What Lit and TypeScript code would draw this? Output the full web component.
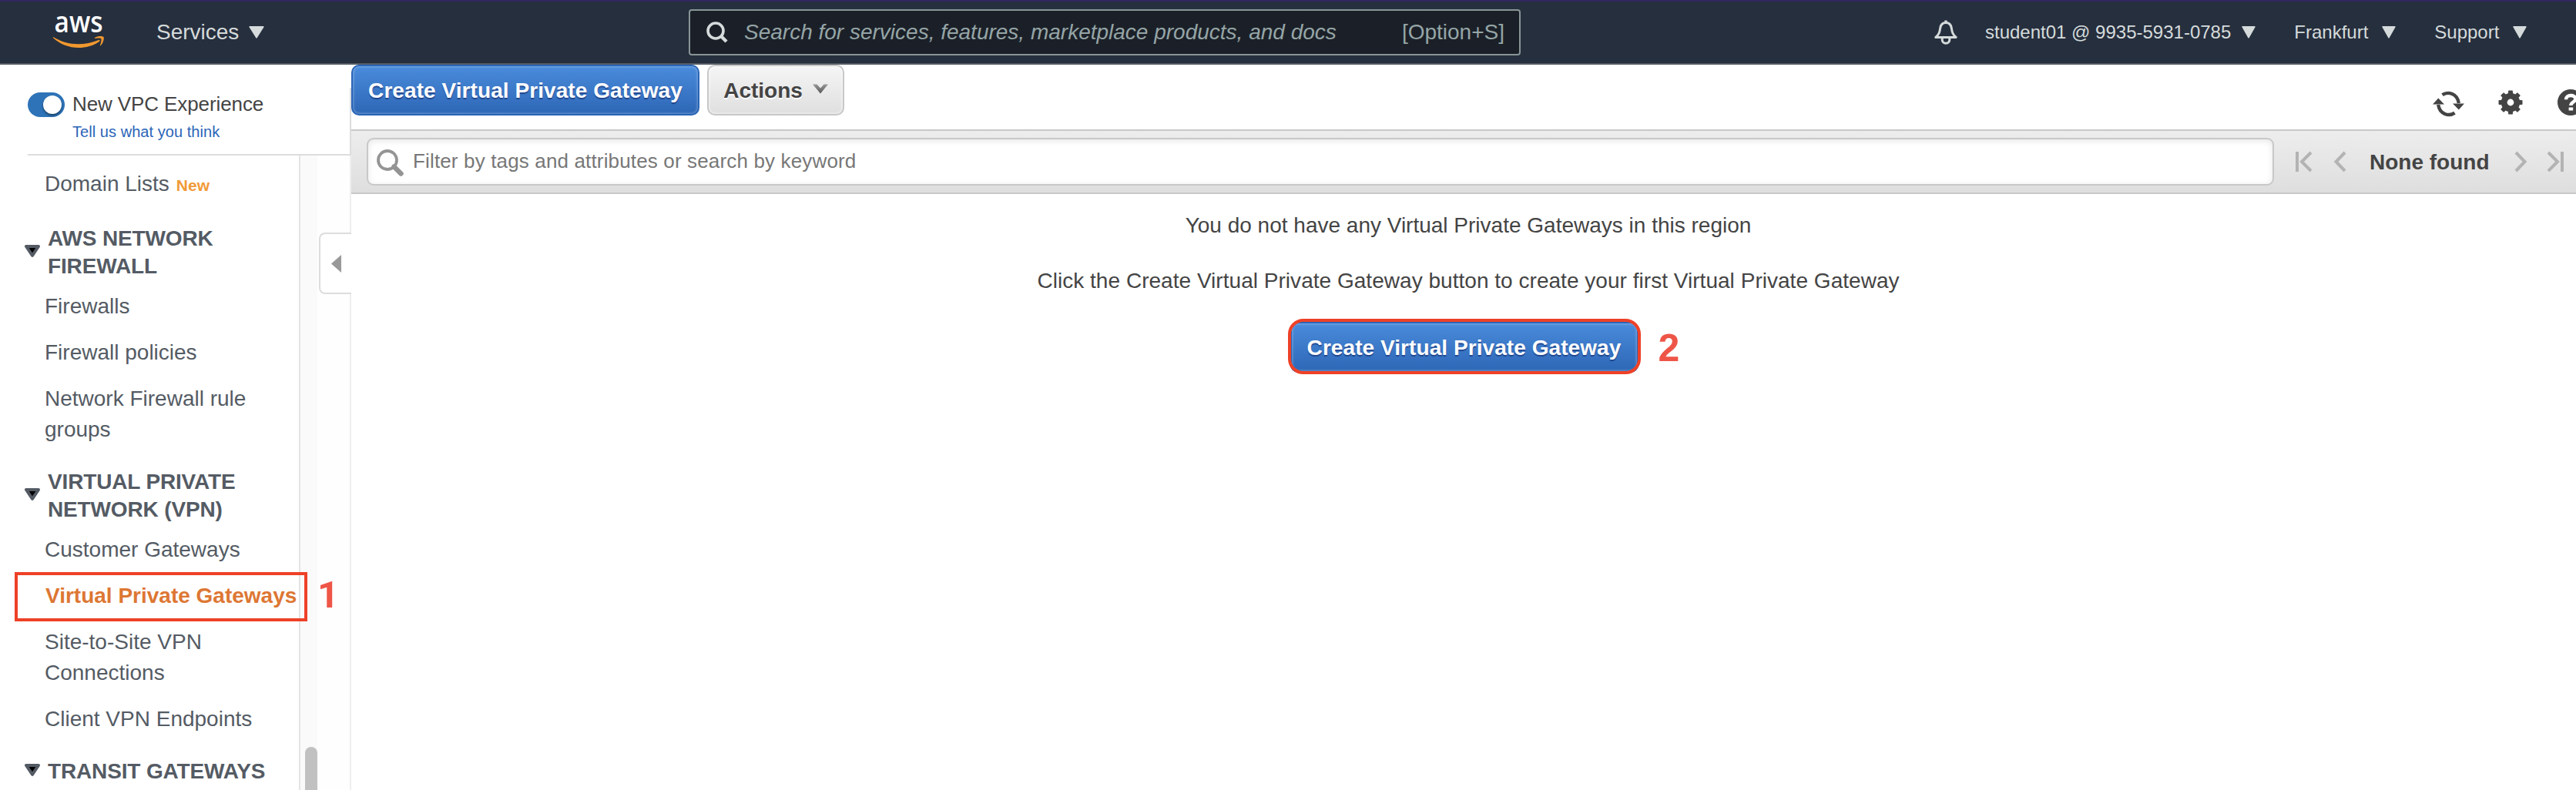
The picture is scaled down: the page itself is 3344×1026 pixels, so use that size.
import { LitElement, html, css, svg } from "lit";
import { customElement } from "lit/decorators.js";

interface NavItem {
  lines: string[];
  badge?: string;
  active?: boolean;
}

interface NavSection {
  title?: string[];
  items: NavItem[];
}

const NAV: NavSection[] = [
  { items: [{ lines: ["Domain Lists"], badge: "New" }] },
  {
    title: ["AWS NETWORK", "FIREWALL"],
    items: [
      { lines: ["Firewalls"] },
      { lines: ["Firewall policies"] },
      { lines: ["Network Firewall rule", "groups"] },
    ],
  },
  {
    title: ["VIRTUAL PRIVATE", "NETWORK (VPN)"],
    items: [
      { lines: ["Customer Gateways"] },
      { lines: ["Virtual Private Gateways"], active: true },
      { lines: ["Site-to-Site VPN", "Connections"] },
      { lines: ["Client VPN Endpoints"] },
    ],
  },
  { title: ["TRANSIT GATEWAYS"], items: [] },
];

const stack = (lines: string[]) =>
  lines.map((l) => html`<span class="line">${l}</span>`);

@customElement("top-bar")
class TopBar extends LitElement {
  static styles = css`
    :host { display: block; }
    * { box-sizing: border-box; }
    .bar {
      display: flex;
      height: 84px;
      border-top: 2px solid #32275f;
      border-bottom: 2px solid #545b64;
      background: #262f3e;
      color: #d5dbdb;
      padding: 0 62px 0 68px;
      align-items: center;
      white-space: nowrap;
    }
    svg { display: block; flex: none; }
    .logo { margin: -10px 66px 0 0; overflow: visible; }
    .logo text { font: 600 37px "Open Sans", sans-serif; fill: #fff; }
    .menu { display: flex; align-items: center; font-size: 24px; }
    .services { font-size: 28px; width: 691px; }
    .services svg { margin-left: 13px; }
    .search {
      display: flex;
      align-items: center;
      width: 1080px;
      height: 60px;
      border: 2px solid #879596;
      border-radius: 4px;
      background: #1b2028;
      color: #95a5a6;
      font-size: 28px;
      padding: 0 19px 0 21px;
      margin-right: 536px;
    }
    .search em { margin-left: 21px; flex: 1; }
    .account { margin-left: 35px; }
    .account svg { margin-left: 14px; }
    .region { margin-left: 50px; }
    .region svg { margin-left: 18px; }
  `;

  private caret(w: number) {
    return html`<svg width=${w} height="16" viewBox="0 0 20 16" preserveAspectRatio="none">
      <path d="M1.2 .8H18.8L10 14.8Z" fill="#d5dbdb" stroke="#d5dbdb" stroke-width="1.6" stroke-linejoin="round" />
    </svg>`;
  }

  render() {
    return html`<header class="bar">
      <svg class="logo" width="69" height="72" viewBox="68 1 69 72">
        <text x="70.500" y="42" textLength="63" lengthAdjust="spacingAndGlyphs">aws</text>
        <path d="M69.4 48.2C79 54 90 57.2 101.5 57.2C110 57.2 119.500 55.400 128 51.900C129.300 51.400 130.400 52.800 129.200 53.700C121.500 59.400 111 62 102 62C89.500 62 78 57.300 69.200 49.500C68.500 48.800 68.700 48 69.400 48.200Z" fill="#f0982f" />
        <path d="M131.200 50.200C130.300 49 125.600 49.600 123.400 49.900C122.700 50 122.600 49.400 123.200 48.900C127 46.300 133.200 47 134.400 47.900C135.600 49 134.200 55.700 130.800 59.100C130.200 59.600 129.700 59.400 129.900 58.700C130.700 56.800 132.200 51.500 131.200 50.200Z" fill="#f0982f" />
      </svg>
      <div class="menu services">Services ${this.caret(20)}</div>
      <div class="search">
        <svg width="28" height="28" viewBox="0 0 28 28" fill="none" stroke="#d5dbdb">
          <circle cx="12" cy="12" r="10" stroke-width="3.6" />
          <path d="M18.800 18.800L26 26" stroke-width="4.400" />
        </svg>
        <em>Search for services, features, marketplace products, and docs</em>
        <span>[Option+S]</span>
      </div>
      <svg width="32" height="32" viewBox="0 0 32 32" fill="none" stroke="#d5dbdb" stroke-width="3" stroke-linejoin="round">
        <path d="M16 .5V3.500" stroke-width="3.400" />
        <path d="M2.800 22.400C7.500 18.500 8 15 8.700 10.500C9.400 6 12 3.600 16 3.600S22.600 6 23.300 10.500C24 15 24.500 18.500 29.200 22.400Z" />
        <path d="M11.200 23V25.500C11.200 28.500 13.300 30.300 16 30.300S20.800 28.500 20.800 25.500V23" />
      </svg>
      <div class="menu account">student01 @ 9935-5931-0785 ${this.caret(18)}</div>
      <div class="menu region">Frankfurt ${this.caret(18)}</div>
      <div class="menu region">Support ${this.caret(18)}</div>
    </header>`;
  }
}

@customElement("side-nav")
class SideNav extends LitElement {
  static styles = css`
    :host { display: block; flex: none; width: 456px; position: relative; }
    * { box-sizing: border-box; }
    .wrap { display: flex; flex-direction: column; height: 942px; overflow: hidden; }
    .intro {
      display: grid;
      grid-template-columns: 48px 1fr;
      column-gap: 10px;
      align-content: start;
      height: 118px;
      flex: none;
      margin-left: 36px;
      padding-top: 34px;
      border-bottom: 2px solid #ddd;
      position: relative;
    }
    .edge { position: absolute; right: 0; top: 30px; bottom: 0; width: 2px; background: #ddd; }
    .toggle {
      display: flex;
      justify-content: flex-end;
      width: 48px;
      height: 32px;
      margin-top: 2px;
      padding: 4px;
      border-radius: 16px;
      background: #2e73b8;
    }
    .knob { width: 24px; height: 24px; border-radius: 50%; background: #fff; box-shadow: 0 2px 3px rgba(0, 0, 0, .45); }
    .name { font-size: 26px; line-height: 35px; letter-spacing: -.1px; color: #444; }
    .feedback { grid-column: 2; font-size: 20px; line-height: 24px; letter-spacing: .05px; margin-top: 6px; color: #2a65b8; }
    .body { display: flex; flex: 1; min-height: 0; }
    nav {
      width: 388px;
      padding: 17px 0 0 32px;
      overflow: hidden;
      font-size: 28px;
      color: #545b64;
      white-space: nowrap;
    }
    .line { display: block; }
    .heading {
      display: flex;
      align-items: center;
      gap: 10px;
      margin: 30px 0 14px;
      font-weight: bold;
      line-height: 36px;
      letter-spacing: -.15px;
    }
    .heading svg { flex: none; margin-bottom: 4px; }
    .list { display: flex; flex-direction: column; gap: 20px; padding-left: 26px; line-height: 40px; }
    .list.lead { margin-bottom: 31px; }
    .active { color: #dd7733; font-weight: bold; padding-left: 1px; }
    .tagged { display: flex; align-items: baseline; gap: 9px; }
    .badge { font-size: 21px; font-weight: bold; color: #f29a38; }
    .track {
      display: flex;
      flex-direction: column;
      justify-content: flex-end;
      align-items: flex-end;
      width: 24px;
      border-left: 2px solid #e4e4e4;
      background: #fafafa;
    }
    .thumb { width: 16px; height: 56px; border-radius: 8px 8px 0 0; background: #c1c1c1; }
    .gutter { flex: 1; border-right: 2px solid #eee; background: #fefefe; }
    .handle {
      position: absolute;
      left: 414px;
      top: 218px;
      width: 42px;
      height: 80px;
      display: flex;
      align-items: center;
      padding-left: 14px;
      border: 2px solid #ddd;
      border-right: 0;
      border-radius: 8px 0 0 8px;
      background: #fff;
    }
  `;

  render() {
    return html`<div class="wrap">
        <div class="intro">
          <div class="toggle"><div class="knob"></div></div>
          <div class="name">New VPC Experience</div>
          <div class="feedback">Tell us what you think</div>
          <div class="edge"></div>
        </div>
        <div class="body">
          <nav>
            ${NAV.map(
              (s) => html`${s.title
                  ? html`<div class="heading">
                      <svg width="20" height="16" viewBox="0 0 20 16">
                        <path d="M2 2H18L10 13.800Z" fill="#000" stroke="#545b64" stroke-width="4" stroke-linejoin="round" />
                      </svg>
                      <div>${stack(s.title)}</div>
                    </div>`
                  : ""}
                <div class="list ${s.title ? "" : "lead"}">
                  ${s.items.map(
                    (i) => html`<div class="${i.active ? "active" : ""} ${i.badge ? "tagged" : ""}">
                      ${stack(i.lines)}${i.badge ? html`<span class="badge">${i.badge}</span>` : ""}
                    </div>`,
                  )}
                </div>`,
            )}
          </nav>
          <div class="track"><div class="thumb"></div></div>
          <div class="gutter"></div>
        </div>
      </div>
      <div class="handle">
        <svg width="13" height="23" viewBox="0 0 13 23"><path d="M13 0V23L0 11.500Z" fill="#999" /></svg>
      </div>`;
  }
}

@customElement("gateway-panel")
class GatewayPanel extends LitElement {
  static styles = css`
    :host { display: block; flex: none; width: 2900px; color: #444; }
    * { box-sizing: border-box; }
    svg { display: block; flex: none; overflow: visible; }
    .tools { display: flex; height: 84px; gap: 10px; }
    .btn {
      display: flex;
      align-items: center;
      justify-content: center;
      height: 66px;
      border-radius: 10px;
      font-size: 28px;
      font-weight: bold;
      white-space: nowrap;
    }
    .primary {
      width: 452px;
      border: 2px solid #2a65b8;
      background: linear-gradient(#4a8bdb, #2d67b6);
      box-shadow: inset 0 0 3px 1px rgba(255, 255, 255, .3);
      color: #fff;
      letter-spacing: .07px;
      padding-top: 2px;
      text-shadow: 0 2px 1px rgba(0, 0, 60, .4);
    }
    .plain {
      width: 178px;
      gap: 13px;
      padding-top: 2px;
      border: 2px solid #c8c8c8;
      background: linear-gradient(#f5f5f5, #dfdfdf);
      box-shadow: inset 0 0 3px 1px rgba(255, 255, 255, .6);
      text-shadow: 0 2px 0 #fff;
    }
    .plain svg { margin-bottom: 6px; }
    .icons { display: flex; align-items: center; margin: 15px 1px 0 auto; height: 68px; gap: 45px; }
    .reload { margin-top: 3px; }
    .filter {
      display: flex;
      align-items: center;
      height: 84px;
      border: 2px solid #c8c8c8;
      border-width: 2px 0;
      background: linear-gradient(#ededed, #dedede);
      padding-left: 20px;
    }
    .field {
      display: flex;
      align-items: center;
      flex: none;
      width: 2476px;
      height: 62px;
      margin: -1px 28px 0 0;
      padding-left: 11px;
      gap: 12px;
      border: 2px solid #c8c8c8;
      border-radius: 9px;
      background: #fff;
      box-shadow: inset 0 2px 8px rgba(0, 0, 0, .1);
      font-size: 26px;
      letter-spacing: .15px;
      color: #777;
    }
    .field svg { margin-top: 3px; }
    .pager { display: flex; align-items: center; font-size: 28px; font-weight: bold; white-space: nowrap; }
    .count { margin: 2px 34px 0 32px; }
    .empty { display: flex; flex-direction: column; align-items: center; font-size: 28px; line-height: 36px; padding-top: 23px; }
    .second { margin-top: 36px; letter-spacing: .03px; }
    .cta { position: relative; margin: 35px 11px 0 0; }
    .ring {
      position: absolute;
      left: -3px;
      top: -4px;
      width: 458px;
      height: 72px;
      border: 4px solid #ee4127;
      border-radius: 20px;
    }
    .step { position: absolute; left: 478px; top: 4px; font: bold 50px/60px "Liberation Sans", sans-serif; color: #ee5547; }
  `;

  private chevrons = (d: string, w: number, bar?: number) => html`<svg width=${w} height="27" viewBox="0 0 ${w} 27" fill="none" stroke="#b3b3b3" stroke-width="4">
    <path d=${d} />${bar !== undefined ? svg`<path d="M${bar} 0V26" />` : ""}
  </svg>`;

  render() {
    return html`
      <div class="tools">
        <div class="btn primary">Create Virtual Private Gateway</div>
        <div class="btn plain">
          Actions
          <svg width="20" height="13" viewBox="0 0 20 13">
            <defs>
              <linearGradient id="tick" x1="0" y1="0" x2="0" y2="1"><stop offset="0" stop-color="#999" /><stop offset="1" stop-color="#555" /></linearGradient>
            </defs>
            <path d="M0 .5H5.500L10 5.500L14.500 .5H20L10 12.500Z" fill="url(#tick)" />
          </svg>
        </div>
        <div class="icons">
          <svg class="reload" width="41" height="34" viewBox="0 0 41 34" fill="none" stroke="#444" stroke-width="4.400">
            <path d="M12.500 5.200C20 .2 32 3.500 33.800 16" />
            <path d="M28.500 28.600C21 33.800 9 30.500 7.200 18" />
            <path d="M26 16.500H41L33.800 24.500Z" fill="#444" stroke="none" />
            <path d="M0 17.500H15L7.300 9.500Z" fill="#444" stroke="none" />
          </svg>
          <svg width="30" height="32" viewBox="-15 -16 30 32">
            <g fill="#444">
              ${[0, 45, 90, 135].map((a) => svg`<rect x="-3" y="-15.500" width="6" height="31" rx="1" transform="rotate(${a})" />`)}
            </g>
            <circle r="8.500" fill="none" stroke="#444" stroke-width="7.500" />
            <circle r="4.400" fill="#fff" />
          </svg>
          <svg width="36" height="36" viewBox="0 0 36 36">
            <circle cx="18" cy="18" r="17" fill="#444" />
            <path d="M12 14.200C12 7.400 24.300 7.400 24.300 13.600C24.300 17.500 18.300 17.600 18.300 22" fill="none" stroke="#fff" stroke-width="4.400" />
            <rect x="15.600" y="24.500" width="5.600" height="4" fill="#fff" />
          </svg>
        </div>
      </div>
      <div class="filter">
        <div class="field">
          <svg width="35" height="35" viewBox="0 0 35 35" fill="none" stroke="#949494">
            <circle cx="14" cy="14" r="12" stroke-width="3.800" />
            <path d="M22.500 22.500L31.500 31.500" stroke-width="6.400" stroke-linecap="round" />
          </svg>
          <span>Filter by tags and attributes or search by keyword</span>
        </div>
        <div class="pager">
          ${this.chevrons("M20 1L8 13L20 25", 20, 2)}
          <svg width="30" height="1"></svg>
          ${this.chevrons("M14 1L2.500 13L14 25", 14)}
          <span class="count">None found</span>
          ${this.chevrons("M0 1L11.500 13L0 25", 14)}
          <svg width="28" height="1"></svg>
          ${this.chevrons("M0 1L12 13L0 25", 20, 18)}
        </div>
      </div>
      <div class="empty">
        <div>You do not have any Virtual Private Gateways in this region</div>
        <div class="second">Click the Create Virtual Private Gateway button to create your first Virtual Private Gateway</div>
        <div class="cta">
          <div class="btn primary">Create Virtual Private Gateway</div>
          <div class="ring"></div>
          <div class="step">2</div>
        </div>
      </div>
    `;
  }
}

@customElement("app-root")
class AppRoot extends LitElement {
  static styles = css`
    :host {
      display: block;
      position: relative;
      width: 3344px;
      height: 1026px;
      overflow: hidden;
      background: #fff;
      font-family: "Liberation Sans", Arial, sans-serif;
    }
    .page { display: flex; height: 942px; }
    .mark { position: absolute; left: 19px; top: 743px; width: 380px; height: 64px; box-sizing: border-box; border: 4px solid #ee4127; }
    .step { position: absolute; left: 412px; top: 743px; font: bold 49px/60px Roboto, sans-serif; color: #ee5547; }
  `;

  render() {
    return html`
      <top-bar></top-bar>
      <div class="page">
        <side-nav></side-nav>
        <gateway-panel></gateway-panel>
      </div>
      <div class="mark"></div>
      <div class="step">1</div>
    `;
  }
}
